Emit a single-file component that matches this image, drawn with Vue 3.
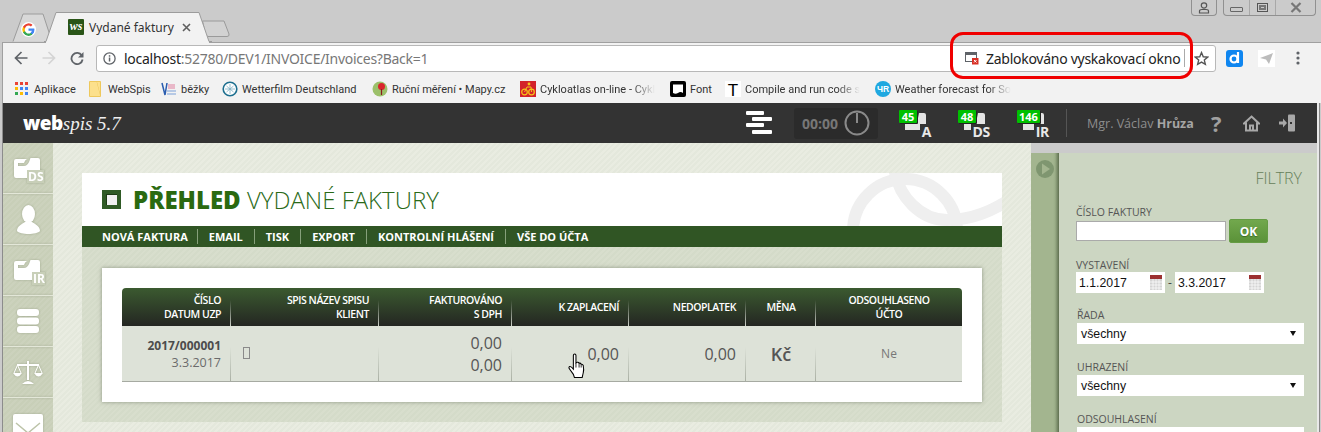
<template>
  <div class="browser">
    <div class="tabstrip">
      <div class="tab-small">
        <svg class="tab-shape" width="50" height="29" viewBox="0 0 50 29"><path d="M7 28.500 L17 1 H37 L46 28.500" fill="#d8d8d8" stroke="#9c9c9c"/></svg>
        <svg class="g-logo" width="13" height="13" viewBox="0 0 24 24"><path d="M23 12.300c0-.8-.1-1.600-.2-2.300H12v4.500h6.200a5.300 5.300 0 0 1-2.300 3.500v2.900h3.700c2.200-2 3.400-5 3.400-8.600z" fill="#4285f4"/><path d="M12 24c3.100 0 5.700-1 7.600-2.800L15.900 18.300c-1 .7-2.300 1.100-3.900 1.100-3 0-5.500-2-6.400-4.800H1.800v3A12 12 0 0 0 12 24z" fill="#34a853"/><path d="M5.600 14.600a7.200 7.200 0 0 1 0-4.600V7H1.800a12 12 0 0 0 0 10.600z" fill="#fbbc05"/><path d="M12 4.800c1.700 0 3.200.6 4.400 1.700l3.300-3.300A12 12 0 0 0 1.800 7l3.800 3c.9-2.900 3.400-5.200 6.400-5.200z" fill="#ea4335"/></svg>
      </div>
      <div class="tab-active">
        <svg class="tab-shape" width="168" height="31" viewBox="0 0 168 31"><path d="M2 31 V29.500 L12 .5 H155 L165 29.500 V31 Z" fill="#f2f2f2"/><path d="M0 29.500 H2 L12 .5 H155 L165 29.500 H168" fill="none" stroke="#9c9c9c"/></svg>
        <span class="tab-fav">ws</span>
        <span class="tab-title">Vydané faktury</span>
        <svg class="tab-x" width="9" height="9" viewBox="0 0 9 9"><path d="M1 1 L8 8 M8 1 L1 8" stroke="#5f5f5f" stroke-width="1.600"/></svg>
      </div>
      <svg class="tab-new" width="30" height="18" viewBox="0 0 30 18"><path d="M1.500 1 H23 L28 14 Q28.500 16.500 26 16.500 H7 Q5 16.500 4.500 14 Z" fill="#d2d2d2" stroke="#9a9a9a"/></svg>
      <div class="winbtns">
        <div class="winbtn user">
          <svg width="12" height="12" viewBox="0 0 12 12"><circle cx="6" cy="3.500" r="2.700" fill="none" stroke="#555" stroke-width="1.200"/><path d="M1.500 11 V9 Q1.500 7.500 4 7.500 H8 Q10.500 7.500 10.500 9 V11 Z" fill="none" stroke="#555" stroke-width="1.200"/></svg>
        </div>
        <div class="wingroup">
          <div class="winbtn"><span class="w-min"></span></div>
          <div class="winbtn"><span class="w-max"></span></div>
          <div class="winbtn wide">
            <svg width="12" height="11" viewBox="0 0 12 11"><path d="M1.500 1 L10.500 10 M10.500 1 L1.500 10" stroke="#777" stroke-width="2.200" fill="none"/></svg>
          </div>
        </div>
      </div>
    </div>

    <div class="toolbar">
      <svg class="tb-ico first" width="14" height="14" viewBox="0 0 14 14"><path d="M13.500 7 H2 M7.500 1 L1.500 7 L7.500 13" fill="none" stroke="#5f6368" stroke-width="1.700"/></svg>
      <svg class="tb-ico" width="14" height="14" viewBox="0 0 14 14"><path d="M.5 7 H12 M6.500 1 L12.500 7 L6.500 13" fill="none" stroke="#d4d4d4" stroke-width="1.700"/></svg>
      <svg class="tb-ico" width="14" height="14" viewBox="0 0 14 14"><path d="M11.800 4.500 A5.600 5.600 0 1 0 12.600 8.500" fill="none" stroke="#5f6368" stroke-width="1.800"/><path d="M13.500 1 V6.500 H8 Z" fill="#5f6368"/></svg>
      <div class="omnibox">
        <svg class="info" width="13" height="13" viewBox="0 0 13 13"><circle cx="6.500" cy="6.500" r="5.600" fill="none" stroke="#5f6368" stroke-width="1.300"/><rect x="5.800" y="5.500" width="1.500" height="4" fill="#5f6368"/><rect x="5.800" y="3.200" width="1.500" height="1.500" fill="#5f6368"/></svg>
        <span class="url"><b>localhost</b>:52780/DEV1/INVOICE/Invoices?Back=1</span>
        <div class="popup-note">
          <svg width="14" height="14" viewBox="0 0 14 14"><rect x="0.500" y="1.500" width="11" height="9" fill="none" stroke="#5f6368"/><rect x="0.500" y="1.500" width="11" height="2.500" fill="#5f6368"/><rect x="7" y="7" width="6.500" height="6.500" fill="#d93025"/><path d="M9 9 L11.500 11.500 M11.500 9 L9 11.500" stroke="#fff"/></svg>
          <span class="popup-text">Zablokováno vyskakovací okno</span>
          <span class="popup-sep"></span>
        </div>
        <svg class="star" width="15" height="15" viewBox="0 0 24 24"><path d="M12 2.500 L14.800 9.200 L22 9.800 L16.500 14.500 L18.200 21.500 L12 17.800 L5.800 21.500 L7.500 14.500 L2 9.800 L9.200 9.200 Z" fill="none" stroke="#555" stroke-width="2.200"/></svg>
      </div>
      <span class="ext-d"><svg width="11" height="12" viewBox="0 0 11 12"><circle cx="5" cy="7" r="3.500" fill="none" stroke="#fff" stroke-width="2.200"/><path d="M9 0 V11" stroke="#fff" stroke-width="2.200"/></svg></span>
      <span class="ext-p"><svg width="13" height="11" viewBox="0 0 13 11"><path d="M0 5 L13 0 L9 11 L6 6.500 Z" fill="#bcbcbc"/></svg></span>
      <svg class="menu" width="4" height="14" viewBox="0 0 4 14"><circle cx="2" cy="2" r="1.600" fill="#5f6368"/><circle cx="2" cy="7" r="1.600" fill="#5f6368"/><circle cx="2" cy="12" r="1.600" fill="#5f6368"/></svg>
      <div class="red-ring"></div>
    </div>

    <div class="bookmarks">
      <div v-for="b in bookmarks" :key="b.label" class="bm" :class="{ fade: b.fade }" :style="{ width: b.w + 'px' }">
        <svg width="16" height="16" viewBox="0 0 16 16" v-html="b.icon"></svg>
        <span class="bm-label">{{ b.label }}</span>
      </div>
    </div>

    <div class="viewport">
      <div class="appbar">
        <div class="logo"><b>web</b><i>spis 5.7</i></div>
        <div class="app-right">
          <svg width="26" height="25" viewBox="0 0 26 25" class="tasks"><rect x="0" y="0" width="18" height="4" rx="1" fill="#fff"/><rect x="6" y="6" width="20" height="4" rx="1" fill="#fff"/><rect x="0" y="12" width="18" height="4" rx="1" fill="#fff"/><rect x="6" y="19" width="20" height="4" rx="1" fill="#fff"/></svg>
          <div class="timer">
            <span>00:00</span>
            <svg width="26" height="26" viewBox="0 0 26 26"><circle cx="13" cy="13" r="11.500" fill="none" stroke="#8a8a8a" stroke-width="2"/><path d="M13 3 V13" stroke="#8a8a8a" stroke-width="2"/></svg>
          </div>
          <div class="counter" v-for="c in counters" :key="c.label">
            <svg width="24" height="19" viewBox="0 0 24 19"><path d="M3 12 H11 Q14 12 16 6 L17 1 H22 Q24 1 24 3 V13 H20 V18 H3 Z" fill="#e4e4e4"/></svg>
            <span class="c-letter">{{ c.label }}</span>
            <span class="c-badge">{{ c.n }}</span>
          </div>
          <span class="app-sep"></span>
          <span class="user-name">Mgr. Václav <b>Hrůza</b></span>
          <span class="qm">?</span>
          <svg class="home" width="17" height="17" viewBox="0 0 17 17"><path d="M8.500 1.500 L16 8.500 H14 V15.500 H3 V8.500 H1 Z M7 15.500 V10.500 H10 V15.500" fill="none" stroke="#a8a8a8" stroke-width="2"/></svg>
          <svg class="logout" width="17" height="18" viewBox="0 0 17 18"><rect x="9" y="0.500" width="7" height="17" rx="1" fill="#a8a8a8"/><rect x="11" y="8" width="2" height="2" fill="#333"/><path d="M0 9 H4" stroke="#a8a8a8" stroke-width="3"/><path d="M4 4.500 L8 9 L4 13.500 Z" fill="#a8a8a8"/></svg>
        </div>
      </div>

      <div class="page">
        <aside class="side">
          <div class="side-item folder">
            <svg width="26" height="20" viewBox="0 0 26 20"><path d="M0 3 Q0 1 2 1 H13 Q11 2 10 5 H4 V8 H10 Q13 8 15 4 L16.500 0 H24 Q26 0 26 2 V18 Q26 20 24 20 H2 Q0 20 0 18 Z" fill="#fff"/></svg>
            <span class="side-tag">DS</span>
          </div>
          <div class="side-item">
            <svg width="23" height="29" viewBox="0 0 23 29"><ellipse cx="11.500" cy="9" rx="6.500" ry="9" fill="#fff"/><path d="M0 26 C0 21 5 19 8 17 H15 C18 19 23 21 23 26 C20 30 3 30 0 26 Z" fill="#fff"/></svg>
          </div>
          <div class="side-item folder">
            <svg width="26" height="20" viewBox="0 0 26 20"><path d="M0 3 Q0 1 2 1 H13 Q11 2 10 5 H4 V8 H10 Q13 8 15 4 L16.500 0 H24 Q26 0 26 2 V18 Q26 20 24 20 H2 Q0 20 0 18 Z" fill="#fff"/></svg>
            <span class="side-tag ir">IR</span>
          </div>
          <div class="side-item">
            <svg width="22" height="24" viewBox="0 0 22 24"><rect width="22" height="7" y="0" rx="3" fill="#fff"/><rect width="22" height="7" y="8.500" rx="3" fill="#fff"/><rect width="22" height="7" y="17" rx="3" fill="#fff"/></svg>
          </div>
          <div class="side-item">
            <svg width="30" height="25" viewBox="0 0 30 25"><path d="M15 1 V20 M4 5 H26" stroke="#fff" stroke-width="2"/><path d="M9 24 Q15 18 21 24 Z" fill="#fff"/><path d="M4.500 5 L1 13 M4.500 5 L8 13 M25.500 5 L22 13 M25.500 5 L29 13" fill="none" stroke="#fff"/><path d="M0 13 Q4.500 20 9 13 Z M21 13 Q25.500 20 30 13 Z" fill="#fff"/></svg>
          </div>
          <div class="side-item mail-item">
            <div class="mail"><svg width="30" height="14" viewBox="0 0 30 14"><path d="M3 1 L15 11 L27 1" fill="none" stroke="#bcc3a8" stroke-width="1.500"/></svg></div>
          </div>
        </aside>

        <main class="content">
          <section class="panel">
            <header class="panel-head">
              <span class="square"></span>
              <h1><b>PŘEHLED</b> VYDANÉ FAKTURY</h1>
              <svg class="watermark" width="155" height="53" viewBox="0 0 155 53"><g fill="none" stroke="#efefef" stroke-width="12"><circle cx="58" cy="58" r="52"/><path d="M47 -8 C50 25 75 47 100 47 C125 47 145 38 165 25"/></g></svg>
            </header>
            <nav class="actions">
              <a v-for="a in actions" :key="a">{{ a }}</a>
            </nav>
            <div class="panel-body">
              <div class="card">
                <div class="tbl">
                  <div class="tr thead">
                    <div class="c c1">ČÍSLO<br>DATUM UZP</div>
                    <div class="c c2">SPIS NÁZEV SPISU<br>KLIENT</div>
                    <div class="c c3">FAKTUROVÁNO<br>S DPH</div>
                    <div class="c c4">K ZAPLACENÍ</div>
                    <div class="c c5">NEDOPLATEK</div>
                    <div class="c c6 mid">MĚNA</div>
                    <div class="c c7 mid">ODSOUHLASENO<br>ÚČTO</div>
                  </div>
                  <div class="tr tbody">
                    <div class="c c1"><strong>2017/000001</strong><span>3.3.2017</span></div>
                    <div class="c c2 left"><i class="missing"></i></div>
                    <div class="c c3 num two">0,00<br>0,00</div>
                    <div class="c c4 num">
                      0,00
                      <svg class="hand" width="20" height="26" viewBox="0 0 18 25"><path d="M5.500 2.500 Q5.500 1 6.800 1 Q8 1 8 2.500 V9.500 L9 9 Q10.500 8.500 11 9.800 Q12.500 9.500 13 10.800 Q14.500 10.500 15 12 Q15.800 16 15 19 L14 23.500 H6.500 L5.500 20.500 L1.500 15 Q.8 13.500 2 13 Q3.300 12.700 5.500 15.500 Z" fill="#fff" stroke="#000"/><path d="M8 9.500 V14 M11 10 V14 M13 11 V14" stroke="#000" stroke-width=".8"/></svg>
                    </div>
                    <div class="c c5 num">0,00</div>
                    <div class="c c6 mid cur">Kč</div>
                    <div class="c c7 mid ne">Ne</div>
                  </div>
                </div>
              </div>
            </div>
          </section>
        </main>

        <div class="strip">
          <svg width="18" height="18" viewBox="0 0 18 18"><circle cx="9" cy="9" r="9" fill="#7f9670"/><path d="M6 3.500 L14 9 L6 14.500 Z" fill="#a3b58f"/></svg>
        </div>

        <aside class="filters">
          <div class="f-title">FILTRY</div>
          <label class="f-label first">ČÍSLO FAKTURY</label>
          <div class="f-row">
            <input class="f-input" type="text">
            <button class="ok">OK</button>
          </div>
          <label class="f-label l2">VYSTAVENÍ</label>
          <div class="f-row dates">
            <template v-for="(d, i) in dates" :key="d">
              <div class="date">
                <span>{{ d }}</span>
                <svg width="12" height="15" viewBox="0 0 12 15"><rect y="0" width="12" height="4" fill="#9c3030"/><rect y="4" width="12" height="11" fill="#d4d4d4"/><path d="M0 7 H12 M0 10 H12 M0 13 H12 M3 4 V15 M6 4 V15 M9 4 V15" stroke="#fff" stroke-width=".7"/></svg>
              </div>
              <em v-if="i === 0" class="dash">-</em>
            </template>
          </div>
          <template v-for="s in selects" :key="s.label">
            <label class="f-label l3">{{ s.label }}</label>
            <div class="select"><span>{{ s.value }}</span><i class="tri"></i></div>
          </template>
        </aside>
      </div>
    </div>
  </div>
</template>

<script setup>
const bookmarks = [
  { label: 'Aplikace', w: 74, icon: '<rect x="1" y="1" width="3" height="3" fill="#ea4335"/><rect x="6" y="1" width="3" height="3" fill="#ea4335"/><rect x="11" y="1" width="3" height="3" fill="#ea4335"/><rect x="1" y="6" width="3" height="3" fill="#fbbc05"/><rect x="6" y="6" width="3" height="3" fill="#4285f4"/><rect x="11" y="6" width="3" height="3" fill="#4285f4"/><rect x="1" y="11" width="3" height="3" fill="#34a853"/><rect x="6" y="11" width="3" height="3" fill="#fbbc05"/><rect x="11" y="11" width="3" height="3" fill="#4285f4"/>' },
  { label: 'WebSpis', w: 73, icon: '<path d="M1.500 .5 H9 L12.500 14 V15.500 H1.500 Z" fill="#fce08c" stroke="#eec85c"/><path d="M9 .5 H12.500 V14" fill="#fce08c" stroke="#eec85c"/>' },
  { label: 'běžky', w: 61, icon: '<path d="M1 2 L4 14 L6 2" fill="none" stroke="#2a5db0" stroke-width="1.500"/><rect x="7" y="3" width="7" height="5" fill="#e9b8c8"/><path d="M6 10 H15 M6 13 H15" stroke="#7aa0d8"/>' },
  { label: 'Wetterfilm Deutschland', w: 150, icon: '<circle cx="8" cy="8" r="6.800" fill="#fff" stroke="#1d6f8f" stroke-width="1.600"/><path d="M8 3 V13 M3 8 H13 M4.500 5 L11.500 11 M11.500 5 L4.500 11" stroke="#7fb0c4" stroke-width=".8"/>' },
  { label: 'Ruční měření • Mapy.cz', w: 148, icon: '<circle cx="8" cy="8" r="7.500" fill="#9cc06a"/><circle cx="9.500" cy="5.500" r="3.500" fill="#d9262c"/><path d="M9.500 8 V14" stroke="#8a1a1e" stroke-width="1.200"/>' },
  { label: 'Cykloatlas on-line - Cykl', w: 150, fade: true, icon: '<rect width="16" height="16" fill="#d3222a"/><circle cx="4.500" cy="11" r="2.800" fill="none" stroke="#f5c518" stroke-width="1.200"/><circle cx="11.500" cy="11" r="2.800" fill="none" stroke="#f5c518" stroke-width="1.200"/><path d="M4.500 11 L7 6 H11 L11.500 11" fill="none" stroke="#f5c518"/><circle cx="9" cy="3" r="1.400" fill="#f5c518"/>' },
  { label: 'Font', w: 55, icon: '<rect width="16" height="16" rx="2" fill="#000"/><path d="M3 3.500 H13 V12 Q10.500 10 8 12 Q5.500 13.500 3 12 Z" fill="#fff"/>' },
  { label: 'Compile and run code s', w: 150, fade: true, icon: '<rect width="16" height="16" fill="#fff"/><text x="8" y="14.500" font-family="Liberation Sans" font-size="17" text-anchor="middle" fill="#000">T</text>' },
  { label: 'Weather forecast for So', w: 137, fade: true, icon: '<circle cx="8" cy="8" r="8" fill="#1fa8e0"/><text x="8" y="11" font-family="Liberation Sans" font-weight="700" font-size="8.500" text-anchor="middle" fill="#fff">ЧR</text>' }
]
const counters = [
  { label: 'A', n: 45 },
  { label: 'DS', n: 48 },
  { label: 'IR', n: 146 }
]
const actions = ['NOVÁ FAKTURA', 'EMAIL', 'TISK', 'EXPORT', 'KONTROLNÍ HLÁŠENÍ', 'VŠE DO ÚČTA']
const dates = ['1.1.2017', '3.3.2017']
// the last select is cut by the window, its value is not visible
const selects = [
  { label: 'ŘADA', value: 'všechny' },
  { label: 'UHRAZENÍ', value: 'všechny' },
  { label: 'ODSOUHLASENÍ', value: '' }
]
</script>

<style>
html, body { margin: 0; overflow: hidden; background: #ccc; }
</style>

<style scoped>
.browser {
  position: relative;
  width: 1321px;
  height: 432px;
  overflow: hidden;
  background: #cbcbcb;
  font-family: "Open Sans", "Noto Sans", sans-serif;
}

/* tabs */
.tabstrip {
  position: relative;
  z-index: 1;
  display: flex;
  align-items: flex-end;
  height: 42px;
  padding-left: 6px;
  box-sizing: border-box;
}
.tab-small { position: relative; width: 45px; height: 29px; }
.tab-shape { position: absolute; left: 0; top: 0; }
.g-logo { position: absolute; left: 15px; top: 9px; background: #fff; border-radius: 50%; padding: 1px; }
.tab-active { position: relative; display: flex; align-items: center; width: 166px; height: 30px; margin-left: -7px; }
.tab-fav {
  position: relative;
  width: 16px;
  height: 16px;
  margin-left: 24px;
  background: #2a5518;
  color: #fff;
  font: italic 700 12px/15px "Liberation Serif", serif;
  text-align: center;
  border-radius: 1px;
}
.tab-title {
  position: relative;
  margin-left: 5px;
  width: 95px;
  font: 12px "Noto Sans", sans-serif;
  color: #333;
  white-space: nowrap;
}
.tab-x { position: relative; margin-left: -2px; }
.tab-new { margin: 0 0 4px -9px; }
.winbtns { position: absolute; right: 5px; top: 0; display: flex; gap: 6px; }
.winbtn {
  display: flex;
  align-items: center;
  justify-content: center;
  width: 25px;
  height: 15px;
}
.winbtn.user { border: 1px solid #909090; border-top: 0; border-radius: 0 0 4px 4px; width: 24px; }
.wingroup { display: flex; border: 1px solid #909090; border-top: 0; border-radius: 0 0 4px 4px; }
.wingroup .winbtn { width: 25px; border-right: 1px solid #a8a8a8; }
.wingroup .winbtn.wide { width: 39px; border-right: 0; }
.w-min { width: 11px; height: 3px; border: 1px solid #666; border-radius: 1px; margin-top: 4px; }
.w-max { width: 9px; height: 7px; border: 1px solid #555; box-shadow: inset 0 0 0 1px #ccc, inset 0 0 0 3px #777; }

/* toolbar */
.toolbar {
  position: relative;
  display: flex;
  align-items: center;
  height: 32px;
  margin-left: 2px;
  padding-bottom: 1px;
  background: #f2f2f2;
  border-left: 1px solid #a0a0a0;
  box-shadow: inset 0 1px 0 #a0a0a0;
}
.tb-ico { margin-left: 14px; flex: none; }
.tb-ico.first { margin-left: 11px; }
.omnibox {
  display: flex;
  align-items: center;
  width: 1118px;
  height: 25px;
  margin-left: 12px;
  background: #fff;
  border: 1px solid #b8b8b8;
  border-radius: 3px;
  flex: none;
}
.info { margin-left: 6px; flex: none; }
.url { margin-left: 8px; width: 841px; font: 14px "Noto Sans", sans-serif; letter-spacing: -.27px; color: #777; white-space: nowrap; }
.url b { font-weight: 400; color: #222; }
.popup-note { display: flex; align-items: center; width: 220px; }
.popup-text { margin-left: 7px; width: 198px; font: 14px "Noto Sans", sans-serif; letter-spacing: -.27px; color: #222; white-space: nowrap; }
.popup-sep { width: 1px; height: 18px; background: #aaa; }
.star { margin-left: 9px; flex: none; }
.ext-d {
  display: flex;
  align-items: center;
  justify-content: center;
  width: 17px;
  height: 17px;
  margin-left: 10px;
  background: #0f86f0;
  border-radius: 3px;
  flex: none;
}
.ext-p { display: flex; align-items: center; justify-content: center; width: 17px; height: 17px; margin-left: 15px; background: #fff; flex: none; }
.menu { margin-left: 21px; flex: none; }
.red-ring {
  position: absolute;
  left: 947px;
  top: -10px;
  width: 237px;
  height: 41px;
  border: 3px solid #f00000;
  border-radius: 13px;
}

/* bookmarks */
.bookmarks {
  display: flex;
  align-items: center;
  height: 28px;
  margin-left: 2px;
  padding-left: 11px;
  background: #f2f2f2;
  border-left: 1px solid #a0a0a0;
}
.bm { display: flex; align-items: center; gap: 4px; flex: none; overflow: hidden; white-space: nowrap; }
.bm svg { flex: none; }
.bm-label { font: 11px Roboto, "Noto Sans", sans-serif; color: #333; }
.bm.fade .bm-label { -webkit-mask-image: linear-gradient(to right, #000 80%, transparent 100%); mask-image: linear-gradient(to right, #000 80%, transparent 100%); }

/* app */
.viewport {
  width: 1314px;
  margin-left: 2px;
  border-left: 1px solid #8c8c8c;
  border-right: 2px solid #e9e9e9;
  box-shadow: 1px 0 0 #888;
}
.appbar {
  display: flex;
  align-items: center;
  justify-content: space-between;
  height: 40px;
  padding: 0 21px 0 20px;
  background: #333;
  box-sizing: border-box;
}
.logo { color: #fff; font-size: 20px; line-height: 24px; white-space: nowrap; }
.logo b { font: 800 19px "Open Sans", sans-serif; letter-spacing: -.5px; }
.logo i { font: italic 19px "Liberation Serif", serif; color: #eee; }
.app-right { display: flex; align-items: center; }
.timer {
  display: flex;
  align-items: center;
  justify-content: space-between;
  width: 84px;
  height: 31px;
  margin-left: 22px;
  padding: 0 8px;
  background: #2b2b2b;
  border-radius: 3px;
  box-sizing: border-box;
  color: #777;
  font-weight: 700;
  font-size: 14px;
}
.counter { position: relative; width: 32px; height: 30px; margin-left: 27px; }
.timer + .counter { margin-left: 21px; }
.counter svg { position: absolute; left: 3px; top: 4px; }
.c-letter {
  position: absolute;
  right: 0;
  top: 16px;
  color: #e8e8e8;
  font: 700 14px/16px "Open Sans", sans-serif;
  background: #333;
  padding-left: 2px;
  letter-spacing: -.3px;
}
.c-badge {
  position: absolute;
  left: 0;
  top: 2px;
  padding: 0 2px;
  min-width: 14px;
  height: 13px;
  background: #00c000;
  color: #fff;
  font: 700 11px/13px "Open Sans", sans-serif;
  text-align: center;
  border-radius: 1px;
  box-shadow: 1px 1px 0 #222;
}
.app-sep { width: 1px; height: 28px; margin-left: 17px; background: #555; }
.user-name { margin-left: 20px; width: 102px; font-size: 12.500px; color: #8d8d8d; white-space: nowrap; }
.user-name b { color: #a5a5a5; }
.qm { margin-left: 22px; width: 12px; font: 700 22px/24px "Open Sans", sans-serif; color: #a0a0a0; }
.home { margin-left: 20px; }
.logout { margin-left: 19px; }

.page { display: flex; height: 289px; }
.side { width: 50px; flex: none; overflow: hidden; background: repeating-linear-gradient(135deg, #c8cfb8 0 2px, #ccd2bd 2px 4px); }
.side-item {
  position: relative;
  display: flex;
  align-items: center;
  justify-content: center;
  height: 50px;
  border-bottom: 1px solid #e3e7d8;
  filter: drop-shadow(0 0 1px rgba(120, 130, 100, .5));
}
.folder svg { margin-left: -2px; }
.side-tag {
  position: absolute;
  left: 24px;
  top: 27px;
  color: #fff;
  background: #c8cfb8;
  font: 700 12px/13px "Open Sans", sans-serif;
  padding-left: 1px;
}
.side-tag.ir { left: 29px; }
.mail-item { align-items: flex-start; padding-top: 16px; height: 60px; box-sizing: border-box; border: 0; }
.mail {
  width: 30px;
  height: 30px;
  background: #fff;
  border-radius: 2px;
  padding-top: 5px;
  box-sizing: border-box;
  text-align: center;
}

.content {
  width: 978px;
  flex: none;
  padding: 30px 29px 0;
  box-sizing: border-box;
  background: repeating-linear-gradient(135deg, #e4e8dc 0 2px, #e9ece1 2px 4px);
}
.panel { width: 920px; height: 249px; display: flex; flex-direction: column; }
.panel-head {
  position: relative;
  display: flex;
  align-items: center;
  height: 53px;
  padding-left: 20px;
  background: #fff;
  box-sizing: border-box;
  overflow: hidden;
}
.square { width: 11px; height: 11px; border: 4px solid #2f5a25; background: #f0f0f0; flex: none; box-shadow: inset 1px 1px 0 #1c3a14; }
h1 {
  margin: 0 0 0 12px;
  font-size: 24px;
  font-weight: 300;
  line-height: 30px;
  color: #2a6a18;
  white-space: nowrap;
}
h1 b { font-weight: 800; color: #2a6a10; }
.watermark { position: absolute; right: 0; bottom: 0; }
.actions {
  display: flex;
  align-items: center;
  height: 21px;
  padding-left: 20px;
  background: #305524;
}
.actions a {
  padding-right: 11px;
  margin-right: 11px;
  border-right: 1px solid #86a07a;
  color: #fff;
  font-size: 11px;
  font-weight: 700;
  line-height: 15px;
  white-space: nowrap;
}
.actions a:first-child { padding-right: 9px; }
.actions a:last-child { border: 0; }
.panel-body {
  flex: 1;
  padding: 21px 20px 20px;
  background: repeating-linear-gradient(135deg, #d4dbc9 0 2px, #d8decd 2px 4px);
}
.card {
  height: 134px;
  padding: 20px;
  background: #fff;
  box-sizing: border-box;
  box-shadow: 0 0 4px rgba(80, 90, 70, .55);
}
.tr { display: flex; }
.thead {
  height: 38px;
  background: linear-gradient(#3b5a30, #242622);
  border-radius: 4px 4px 0 0;
  color: #fff;
  font-size: 10.500px;
  font-weight: 600;
  letter-spacing: -.45px;
  line-height: 14px;
}
.c {
  position: relative;
  display: flex;
  flex-direction: column;
  justify-content: center;
  align-items: flex-end;
  padding-right: 10px;
  box-sizing: border-box;
  text-align: right;
  white-space: nowrap;
}
.c::after {
  content: "";
  position: absolute;
  right: 0;
  width: 1px;
  bottom: 0;
  height: 34px;
  background: linear-gradient(to bottom, transparent, #aab0a4);
}
.thead .c { display: block; height: 38px; padding-top: 5px; }
.thead .c4, .thead .c5, .thead .c6 { padding-top: 0; line-height: 38px; }
.thead .c::after { background: linear-gradient(to bottom, transparent, #cfd4ca); height: 26px; }
.c7::after { display: none; }
.c1 { width: 109px; }
.c2 { width: 148px; }
.c3 { width: 133px; }
.c4 { width: 117px; }
.c5 { width: 117px; }
.c6 { width: 70px; }
.c7 { width: 146px; }
.c.mid { text-align: center; align-items: center; padding-right: 0; }
.tbody {
  height: 56px;
  background: #dde2d8;
  border-bottom: 1px solid #a6aaa2;
  box-sizing: border-box;
  color: #555;
}
.tbody .c { height: 55px; }
.tbody .c1 strong { font-size: 12px; line-height: 17px; color: #4c4c4c; font-weight: 700; }
.tbody .c1 span { font-size: 12.500px; line-height: 17px; color: #6b6b6b; }
.c.left { align-items: flex-start; padding: 0 0 0 12px; }
.missing { display: block; width: 5px; height: 10px; border: 1px solid #8a8a8a; margin-bottom: 2px; }
.num { font-size: 16px; line-height: 22px; color: #555; }
.cur { font-size: 18px; font-weight: 600; color: #555; }
.ne { font-size: 12px; color: #777; }
.hand { position: absolute; left: 55px; top: 27px; }

.strip {
  width: 28px;
  flex: none;
  margin-top: 10px;
  padding: 7px 0 0 5px;
  box-sizing: border-box;
  background: linear-gradient(to right, #a3b58f 0 22px, #9bae88 24px, #5f7050 28px);
}
.filters {
  flex: 1;
  margin-top: 10px;
  padding: 15px 0 0 17px;
  background: #ccd6c2;
  box-sizing: border-box;
  overflow: hidden;
}
.f-title { margin-right: 15px; text-align: right; font-size: 16px; font-weight: 300; line-height: 20px; color: #66805a; }
.f-label { display: block; font-size: 10.500px; line-height: 14px; color: #555; }
.f-label.first { margin-top: 17px; }
.f-label.l2 { margin-top: 15px; }
.f-label.l3 { margin-top: 16px; margin-left: 1px; }
.f-row { display: flex; align-items: flex-start; }
.f-input {
  width: 150px;
  height: 20px;
  margin: 2px 0 0;
  padding: 0;
  background: #fff;
  border: 1px solid #aaa;
  box-sizing: border-box;
}
.ok {
  width: 39px;
  height: 24px;
  margin: 0 0 0 3px;
  padding: 0;
  background: linear-gradient(#72a84d, #5b9239);
  border: 1px solid #659c44;
  border-radius: 2px;
  color: #fff;
  font: 700 12px "Open Sans", sans-serif;
  text-shadow: 0 1px 1px #3c6a24;
}
.dates { align-items: center; margin-bottom: -1px; }
.date {
  display: flex;
  align-items: center;
  justify-content: space-between;
  width: 89px;
  height: 21px;
  padding: 0 3px;
  background: #fff;
  box-sizing: border-box;
  font: 12.300px "Liberation Sans", sans-serif;
  color: #111;
}
.dash { width: 10px; font: 12px "Open Sans", sans-serif; color: #444; text-align: center; }
.select {
  display: flex;
  align-items: center;
  justify-content: space-between;
  width: 227px;
  height: 21px;
  margin: 1px 0 0 1px;
  padding: 0 8px 0 4px;
  background: #fff;
  box-sizing: border-box;
  font: 12.300px "Liberation Sans", sans-serif;
  color: #111;
}
.tri { width: 0; height: 0; border: 3px solid transparent; border-top: 5px solid #111; border-bottom: 0; }
</style>
